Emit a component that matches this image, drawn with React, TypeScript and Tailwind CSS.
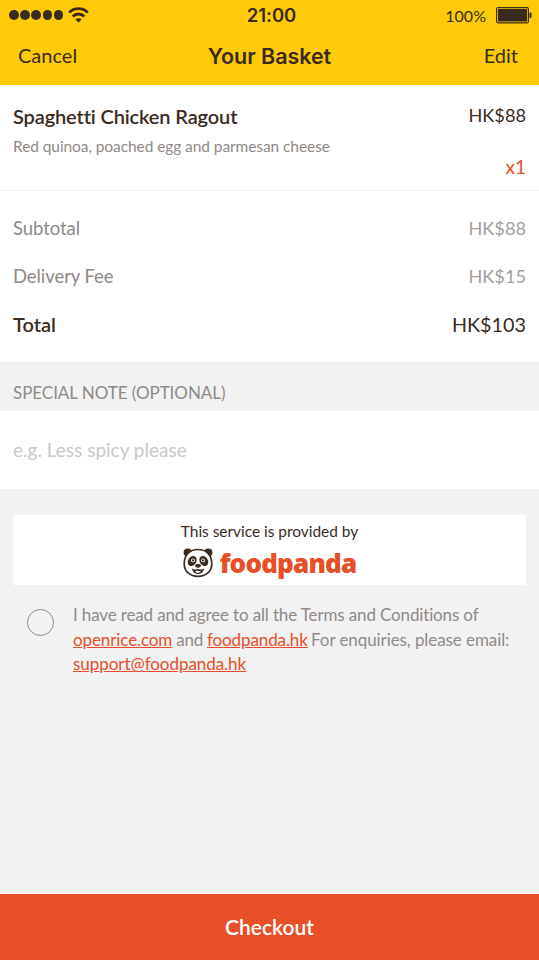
import { useState } from "react";

const charges = [
  { label: "Subtotal", amount: "HK$88" },
  { label: "Delivery Fee", amount: "HK$15" },
];

function WifiIcon() {
  return (
    <svg width="21" height="16" viewBox="0 0 21 16" fill="none" stroke="#3b2b1f" strokeWidth="2.8">
      <path d="M1.2 5.4a13.2 13.2 0 0 1 18.6 0" />
      <path d="M4.7 9.4a8.2 8.2 0 0 1 11.6 0" />
      <path d="M7.4 12.5a4.4 4.4 0 0 1 6.2 0L10.5 15.6z" fill="#3b2b1f" stroke="none" />
    </svg>
  );
}

function BatteryIcon() {
  return (
    <svg width="36" height="17" viewBox="0 0 36 17" fill="#3b2b1f">
      <rect x="0.6" y="0.6" width="31.8" height="15.3" rx="1.5" fill="none" stroke="#3b2b1f" strokeWidth="1.2" />
      <rect x="2" y="2" width="29" height="12.5" rx="0.5" />
      <path d="M33.5 5.5h1a1 1 0 0 1 1 1v3.5a1 1 0 0 1-1 1h-1z" />
    </svg>
  );
}

function PandaIcon() {
  return (
    <svg width="30" height="30" viewBox="0 0 30 30" fill="#3b2b1f">
      <circle cx="4.7" cy="4.6" r="4.1" />
      <circle cx="25.3" cy="4.6" r="4.1" />
      <path
        d="M15 1.5c7.8 0 13.8 5.2 13.8 14.2C28.8 23.5 22.8 28.4 15 28.4S1.2 23.5 1.2 15.7C1.2 6.7 7.2 1.5 15 1.5z"
        fill="#fff"
        stroke="#3b2b1f"
        strokeWidth="1.7"
      />
      {/* eye patches */}
      <ellipse cx="9.2" cy="13" rx="4.1" ry="5.3" transform="rotate(32 9.2 13)" />
      <ellipse cx="20.8" cy="13" rx="4.1" ry="5.3" transform="rotate(-32 20.8 13)" />
      <circle cx="10" cy="12.4" r="1.9" fill="#fff" />
      <circle cx="20" cy="12.4" r="1.9" fill="#fff" />
      <circle cx="10.1" cy="12.4" r="1.1" />
      <circle cx="19.9" cy="12.4" r="1.1" />
      {/* nose and mouth */}
      <path d="M11.9 17.6c0-1 1.4-1.6 3.1-1.6s3.1.6 3.1 1.6c0 1.2-1.8 2.3-3.1 2.3s-3.1-1.1-3.1-2.3z" />
      <path d="M8.7 19.9c1.5 1.7 4.5 2 6.3.8 1.8 1.2 4.8.9 6.3-.8-.6 3.7-3 6-6.3 6s-5.7-2.3-6.3-6z" />
      <path d="M12.2 23.5c1-1 4.6-1 5.6 0-.6.9-1.6 1.3-2.8 1.3s-2.2-.4-2.8-1.3z" fill="#fff" />
    </svg>
  );
}

export default function BasketPage() {
  const [agreed, setAgreed] = useState(false);
  const [note, setNote] = useState("");

  return (
    <div className="flex h-[960px] w-[539px] flex-col bg-[#f2f2f2] font-['Lato',sans-serif] text-[#3b2b1f] [font-variant-ligatures:none]">
      {/* HEADER */}
      <header className="h-[85px] shrink-0 bg-[#ffcb08]">
        <div className="grid h-[30px] grid-cols-3 items-center pl-[9px] pr-[7px]">
          <div className="flex items-center gap-[5px]">
            <div className="flex gap-[1.5px]">
              {[0, 1, 2, 3, 4].map((dot) => (
                <span key={dot} className="size-[9.7px] rounded-full bg-[#3b2b1f]" />
              ))}
            </div>
            <WifiIcon />
          </div>
          <span className="pl-[2px] pt-px text-center font-['Inter',sans-serif] text-[18.5px] font-semibold">
            21:00
          </span>
          <div className="flex items-center justify-end gap-[10px]">
            <span className="pt-px text-[16px]">100%</span>
            <BatteryIcon />
          </div>
        </div>
        <div className="grid h-[53px] grid-cols-3 items-center pl-[18px] pr-[21px]">
          <button className="pb-[3px] text-left text-[20px]">Cancel</button>
          <h1 className="pl-[3px] text-center font-['Inter',sans-serif] text-[21.5px] font-semibold tracking-[-0.05px]">
            Your Basket
          </h1>
          <button className="pb-[3px] text-right text-[20px]">Edit</button>
        </div>
      </header>

      {/* BASKET ITEM */}
      <section className="flex h-[106px] shrink-0 justify-between border-b border-[#f4f4f4] bg-white px-[13px] pt-[17px]">
        <div>
          <h2 className="text-[20px] font-semibold leading-[28px] tracking-[-0.13px]">Spaghetti Chicken Ragout</h2>
          <p className="mt-[4px] text-[15.5px] leading-[24px] tracking-[-0.08px] text-[#8f8a86]">
            Red quinoa, poached egg and parmesan cheese
          </p>
        </div>
        <div className="text-right text-[18.2px] leading-[26px]">
          <p>HK$88</p>
          <p className="mt-[26px]">
            <span className="text-[19px] text-[#e64f28]">x1</span>
          </p>
        </div>
      </section>

      {/* TOTALS */}
      <section className="h-[171px] shrink-0 bg-white px-[13px] pt-[13px]">
        {charges.map((c) => (
          <div key={c.label} className="flex h-[48px] items-center justify-between">
            <span className="pt-[2px] text-[18.5px] tracking-[-0.07px] text-[#8f8a86]">{c.label}</span>
            <span className="pt-[2px] text-[18.2px] text-[#a0a0a0]">{c.amount}</span>
          </div>
        ))}
        <div className="flex h-[48px] items-center justify-between">
          <span className="text-[20px] font-semibold">Total</span>
          <span className="pt-[2px] text-[19.8px]">HK$103</span>
        </div>
      </section>

      {/* SPECIAL NOTE */}
      <label htmlFor="note" className="flex h-[49px] shrink-0 items-end px-[13px] pb-[6px] text-[17px] tracking-[-0.05px] text-[#8f8a86]">
        SPECIAL NOTE (OPTIONAL)
      </label>
      <input
        id="note"
        value={note}
        onChange={(e) => setNote(e.target.value)}
        placeholder="e.g. Less spicy please"
        className="h-[78px] shrink-0 bg-white px-[13px] pb-px text-[19px] outline-none placeholder:text-[#c8c8c8]"
      />

      {/* PROVIDER */}
      <div className="mx-[13px] mt-[26px] flex h-[70px] shrink-0 flex-col items-center bg-white pt-[5px]">
        <p className="text-[15.5px] leading-[22px] tracking-[-0.04px]">This service is provided by</p>
        <div className="mt-[6px] flex items-center gap-[7px]">
          <PandaIcon />
          <span className="font-['Open_Sans',sans-serif] text-[26px] font-extrabold leading-[30px] tracking-[-0.8px] text-[#e64f28]">
            foodpanda
          </span>
        </div>
      </div>

      {/* TERMS */}
      <div className="mt-[18px] flex pl-[27px]">
        <button
          aria-label="Agree to terms"
          onClick={() => setAgreed(!agreed)}
          className={
            "mt-[6px] size-[27px] shrink-0 rounded-full border border-[#8f8a86] " +
            (agreed ? "bg-[#e64f28]" : "bg-transparent")
          }
        />
        <p className="ml-[19px] whitespace-nowrap text-[17px] leading-[24.7px] tracking-[-0.14px] text-[#8f8a86]">
          I have read and agree to all the Terms and Conditions of
          <br />
          <a className="tracking-[-0.1px] text-[#e64f28] underline">openrice.com</a>
          <span className="tracking-[-0.3px]"> and </span>
          <a className="tracking-[-0.1px] text-[#e64f28] underline">foodpanda.hk</a>
          <span className="-ml-px tracking-[-0.08px]"> For enquiries, please email:</span>
          <br />
          <a className="tracking-[-0.05px] text-[#e64f28] underline">support@foodpanda.hk</a>
        </p>
      </div>

      <button className="mt-auto h-[66px] shrink-0 bg-[#e64f28] pb-px text-[21px] font-semibold text-white">
        Checkout
      </button>
    </div>
  );
}
